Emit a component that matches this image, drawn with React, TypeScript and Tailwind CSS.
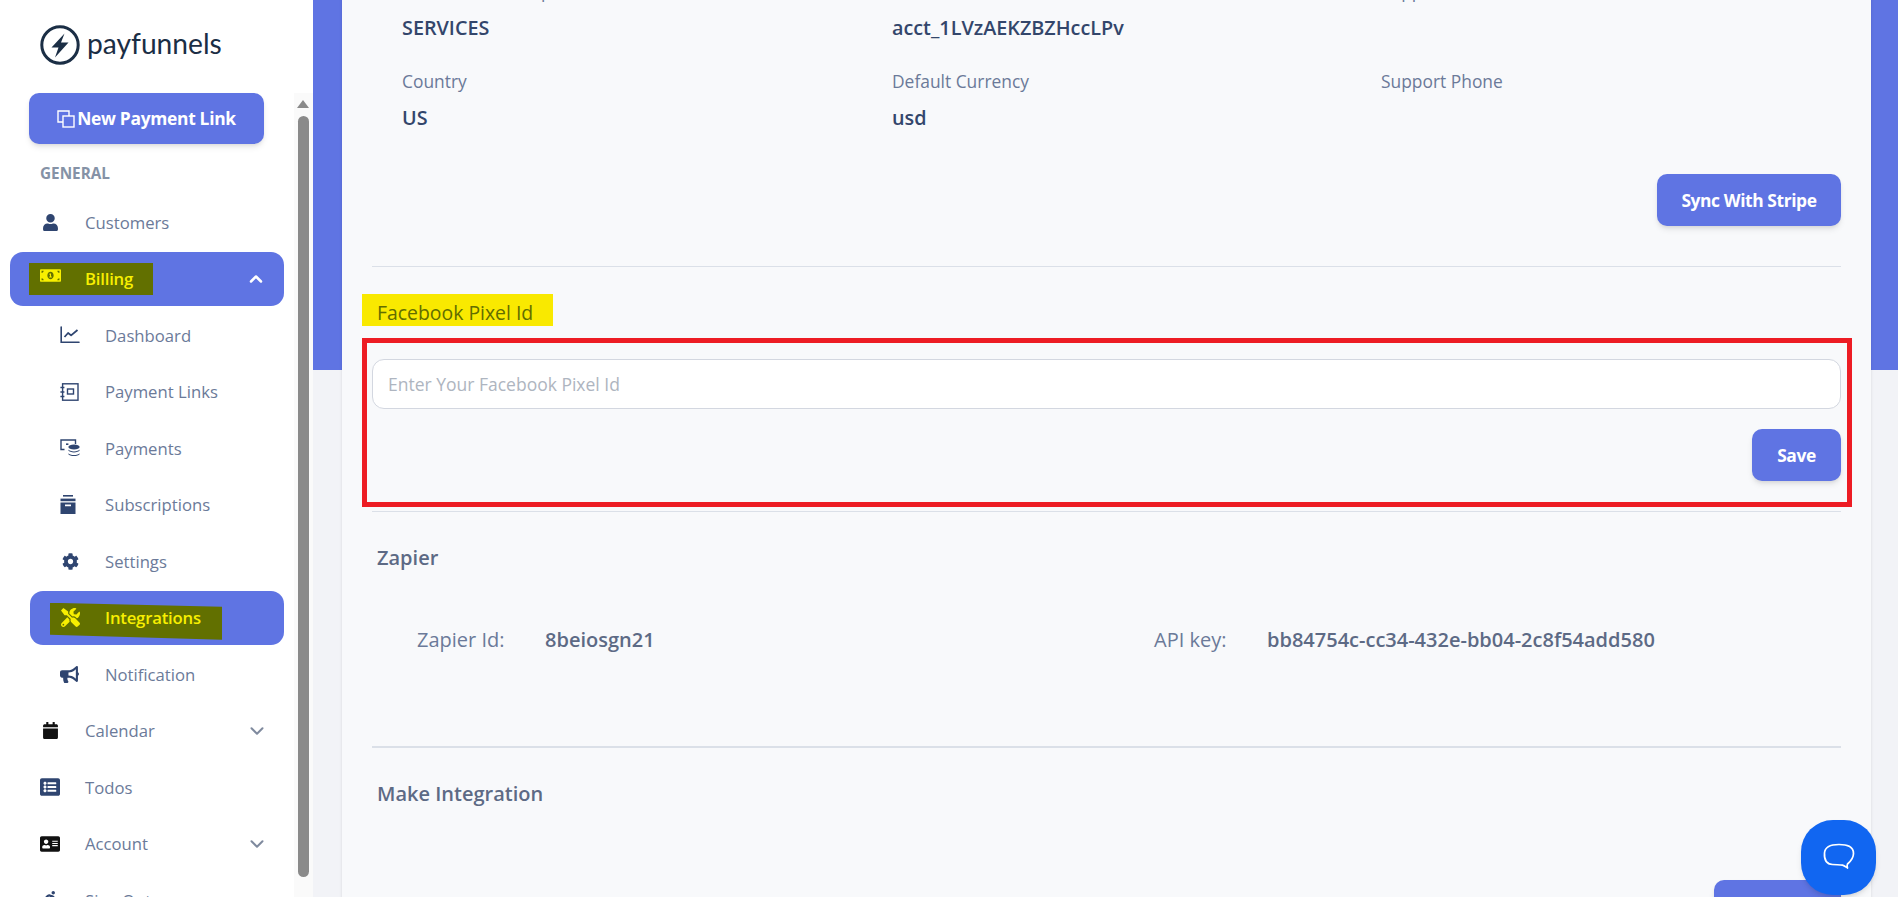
import React from "react";
import {
  FaAddressCard,
  FaBullhorn,
  FaCalendar,
  FaCog,
  FaListAlt,
  FaMoneyBillAlt,
  FaRunning,
  FaTools,
  FaUser,
} from "react-icons/fa";
import { ChevronDown, ChevronUp } from "lucide-react";

const ChartIcon = () => (
  <svg width="20" height="18" viewBox="0 0 20 18" fill="none" stroke="#2f4570">
    <path d="M1.2 1v15.2H19" strokeWidth="1.6" strokeLinecap="round" />
    <path d="M4.5 11l3.6-4 3 2.4L17.5 4" strokeWidth="1.8" strokeLinejoin="round" />
  </svg>
);

const NotebookIcon = () => (
  <svg width="19" height="18" viewBox="0 0 19 18" fill="none" stroke="#2f4570">
    <rect x="2.6" y="0.8" width="15.4" height="16.4" strokeWidth="1.4" />
    <rect x="7.5" y="6" width="6" height="5" strokeWidth="1.4" />
    <path d="M0.4 4.5h4M0.4 9h4M0.4 13.5h4" strokeWidth="1.4" />
  </svg>
);

const PaymentsIcon = () => (
  <svg width="20" height="18" viewBox="0 0 20 18" fill="none">
    <path d="M4.5 10.5H1V1h14.5v4" stroke="#2f4570" strokeWidth="1.4" />
    <rect x="6" y="4.4" width="2.4" height="1.6" fill="#2f4570" />
    <ellipse cx="14" cy="8" rx="5.6" ry="2.4" fill="#2f4570" />
    <path d="M8.4 10.6c1 2.4 10.2 2.4 11.2 0v1c-1 2.4-10.2 2.4-11.2 0z" fill="#2f4570" />
    <path d="M8.4 14.2c1 2.4 10.2 2.4 11.2 0v1c-1 2.4-10.2 2.4-11.2 0z" fill="#2f4570" />
  </svg>
);

const ArchiveIcon = () => (
  <svg width="16" height="19" viewBox="0 0 16 19" fill="#2f4570">
    <rect x="3" y="0" width="10" height="1.6" />
    <rect x="0.5" y="3.6" width="15" height="2.6" />
    <path d="M0.5 7.4h15V19H0.5z M5 9.6v1.6h6V9.6z" fillRule="evenodd" />
  </svg>
);

const LinkIcon = () => (
  <svg width="18" height="18" viewBox="0 0 18 18" fill="none" stroke="#fff" strokeWidth="1.4">
    <path d="M6 12H1V1h11v5" />
    <rect x="6" y="6" width="11" height="11" />
  </svg>
);

const NavItem = ({
  icon,
  label,
  sub = false,
  chevron,
}: {
  icon: React.ReactNode;
  label: string;
  sub?: boolean;
  chevron?: boolean;
}) => (
  <div className={`flex h-[56.5px] items-center ${sub ? "pl-[60px]" : "pl-[40px]"}`}>
    <span className="flex w-[45px] shrink-0 items-center">{icon}</span>
    <span className="text-[16.7px] text-[#6b7a99]">{label}</span>
    {chevron && <ChevronDown size={22} strokeWidth={2.2} className="ml-auto mr-[26px] text-[#7f8a9e]" />}
  </div>
);

const Sidebar = () => (
  <aside className="flex h-screen w-[313px] shrink-0 flex-col overflow-hidden bg-white">
    {/* logo */}
    <div className="flex h-[93px] shrink-0 items-center gap-[7px] pb-[3px] pl-[40px]">
      <svg width="40" height="40" viewBox="0 0 40 40">
        <circle cx="20" cy="20" r="18.2" fill="none" stroke="#1b2e45" strokeWidth="3" />
        <path d="M24.5 8.500L11.500 22.500h7l-3.500 10 13.500-15h-7.500z" fill="#1b2e45" />
      </svg>
      <span className="-mt-[3px] font-['Lato',sans-serif] text-[28.2px] leading-none text-[#1b2e45]">payfunnels</span>
    </div>

    <div className="flex min-h-0 flex-1">
      <nav className="w-[294px] shrink-0">
        <button className="mx-[29px] flex h-[51px] w-[235px] items-center justify-center gap-[2px] rounded-[10px] bg-[#5f74e3] text-[17.4px] font-bold tracking-[-0.3px] text-white shadow-md">
          <LinkIcon />
          New Payment Link
        </button>
        <div className="mb-[10px] mt-[19px] pb-px pl-[40px] text-[15.3px] font-bold leading-5 text-[#8592a6]">GENERAL</div>

        <NavItem icon={<FaUser size={17} className="ml-[2px] text-[#2f4570]" />} label="Customers" />

        {/* billing, marked up in the screenshot */}
        <div className="flex h-[56.5px] items-center">
          <div className="ml-[10px] flex h-[54px] w-[274px] items-center rounded-[13px] bg-[#5f74e3] pl-[19px] pr-[18px]">
            <div className="flex h-[32px] w-[124px] items-center bg-[#627000] pl-[11px] text-[#f8ef00]">
              <span className="flex w-[45px] items-center">
                <FaMoneyBillAlt size={21} className="-mt-[6px]" />
              </span>
              <span className="text-[16.7px] font-semibold tracking-[-0.2px]">Billing</span>
            </div>
            <ChevronUp size={20} strokeWidth={3} className="ml-auto text-white" />
          </div>
        </div>

        <NavItem sub icon={<ChartIcon />} label="Dashboard" />
        <NavItem sub icon={<NotebookIcon />} label="Payment Links" />
        <NavItem sub icon={<PaymentsIcon />} label="Payments" />
        <NavItem sub icon={<ArchiveIcon />} label="Subscriptions" />
        <NavItem sub icon={<FaCog size={17} className="ml-[2px] text-[#2f4570]" />} label="Settings" />

        {/* integrations, marked up in the screenshot */}
        <div className="flex h-[56.5px] items-center">
          <div className="ml-[30px] flex h-[54px] w-[254px] items-center rounded-[13px] bg-[#5f74e3] pl-[20px]">
            <div className="mt-[7px] flex h-[37px] w-[172px] items-center bg-[#627000] pb-[7px] pl-[11px] text-[#f8ef00] [clip-path:polygon(0_0,100%_4px,100%_100%,0_32px)]">
              <span className="flex w-[44px] items-center">
                <FaTools size={19} />
              </span>
              <span className="text-[16.7px] font-semibold tracking-[-0.2px]">Integrations</span>
            </div>
          </div>
        </div>

        <NavItem sub icon={<FaBullhorn size={19} className="text-[#2f4570]" />} label="Notification" />
        <NavItem icon={<FaCalendar size={17} className="ml-[2px] text-[#111111]" />} label="Calendar" chevron />
        <NavItem icon={<FaListAlt size={20} className="text-[#2f4570]" />} label="Todos" />
        <NavItem icon={<FaAddressCard size={20} className="text-[#111111]" />} label="Account" chevron />
        <NavItem icon={<FaRunning size={18} className="ml-[2px] text-[#2f4570]" />} label="Sign Out" />
      </nav>

      {/* scrollbar */}
      <div className="flex w-[19px] shrink-0 flex-col items-center bg-[#fafafa] pr-[1px] pt-[7px]">
        <div className="h-0 w-0 border-x-[6px] border-b-[8px] border-x-transparent border-b-[#8a8a8a]" />
        <div className="mt-[8px] h-[761px] w-[11px] shrink-0 rounded-full bg-[#8a8a8a]" />
      </div>
    </div>
  </aside>
);

const Field = ({ label, value }: { label: string; value?: string }) => (
  <div className="h-[90px]">
    <div className="-mt-[1px] text-[17.4px] leading-6 text-[#6b7a99]">{label}</div>
    {value && <div className="mt-[13px] text-[19.8px] font-semibold leading-6 text-[#33466b]">{value}</div>}
  </div>
);

const ActionButton = ({ children, width }: { children: React.ReactNode; width: string }) => (
  <button className={`h-[52px] ${width} rounded-[10px] bg-[#5f74e3] text-[17.4px] font-bold tracking-[-0.4px] text-white shadow-md`}>
    {children}
  </button>
);

export default function App() {
  return (
    <div className="flex h-screen overflow-hidden bg-[#f2f3f7] font-['Open_Sans',sans-serif]">
      <Sidebar />

      <main className="relative min-w-0 flex-1 overflow-hidden">
        <div className="absolute inset-x-0 top-0 h-[370px] bg-[#5f74e3]" />

        <div className="relative -mt-5 ml-[29px] mr-[27px] bg-[#f8f9fb] px-[30px] pb-10 shadow-sm">
          <div className="grid grid-cols-[490px_489px_1fr] pl-[30px]">
            <Field label="Statement Descriptor" value="SERVICES" />
            <Field label="Account Id" value="acct_1LVzAEKZBZHccLPv" />
            <Field label="Support Email" />
            <Field label="Country" value="US" />
            <Field label="Default Currency" value="usd" />
            <Field label="Support Phone" />
          </div>

          <div className="mt-[14px] flex justify-end">
            <ActionButton width="w-[184px]">Sync With Stripe</ActionButton>
          </div>
          <div className="mt-10 h-px bg-[#dbe0e8]" />

          <h3 className="-ml-[10px] mt-[27px] flex h-8 w-[191px] items-center bg-[#f9e900] pl-[15px] pt-[6px] text-[19.4px] font-medium text-[#626d00]">
            Facebook Pixel Id
          </h3>

          <div className="-ml-[10px] -mr-[11px] mt-3 border-[5px] border-[#ed1c24] pb-[21px] pl-[5px] pr-[6px] pt-4">
            <input
              placeholder="Enter Your Facebook Pixel Id"
              className="h-[50px] w-full rounded-xl border border-[#d3d7e0] bg-white px-[15px] text-[17.5px] placeholder:text-[#aeb5c0]"
            />
            <div className="mt-5 flex justify-end">
              <ActionButton width="w-[89px]">Save</ActionButton>
            </div>
          </div>
          <div className="mt-1 h-px bg-[#dbe0e8]" />

          <h3 className="mt-[34px] pl-[5px] text-[20px] font-semibold leading-6 text-[#5d6a85]">Zapier</h3>
          <div className="mt-[58px] flex pl-[45px] text-[20px] leading-6">
            <span className="w-[128px] text-[#6b7a99]">Zapier Id:</span>
            <span className="w-[609px] font-semibold text-[#5d6a85]">8beiosgn21</span>
            <span className="w-[113px] text-[#6b7a99]">API key:</span>
            <span className="font-semibold text-[#5d6a85]">bb84754c-cc34-432e-bb04-2c8f54add580</span>
          </div>
          <div className="mt-[94px] h-0.5 bg-[#dbe0e8]" />

          <h3 className="mt-[34px] pl-[5px] text-[20px] font-semibold leading-6 text-[#5d6a85]">Make Integration</h3>
          <div className="mt-[74px] flex justify-end">
            <ActionButton width="w-[127px]">Save</ActionButton>
          </div>
        </div>

        {/* chat widget */}
        <button className="absolute bottom-[2px] right-[22px] flex h-[75px] w-[75px] items-center justify-center rounded-[32px] bg-[#1166f1] shadow-md">
          <svg width="34" height="34" viewBox="0 0 34 34" fill="none" stroke="#fff" strokeWidth="1.7" strokeLinejoin="round">
            <path d="M17 3.500c-8 0-14 1.500-14.500 8.500-.4 6 1 11 8 11.500 4 .3 8 .2 10 .6 1.500.3 3 1.500 5 2.900-.6-2-.6-3 0-4 3.500-3 6-6 6-10.500C31.500 5.500 25 3.500 17 3.500z" />
          </svg>
        </button>
      </main>
    </div>
  );
}
